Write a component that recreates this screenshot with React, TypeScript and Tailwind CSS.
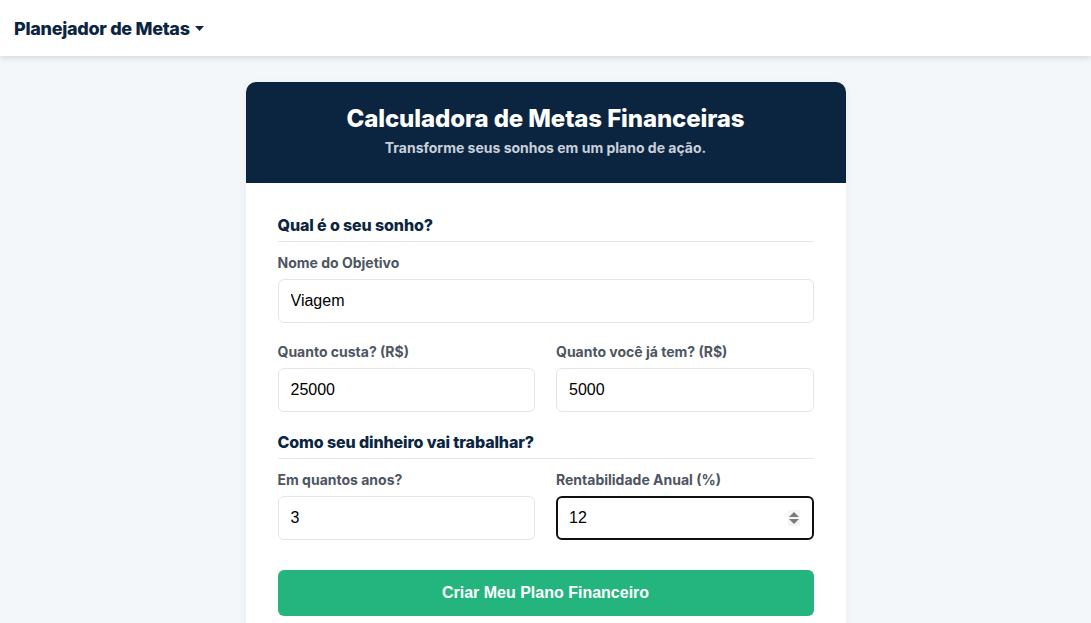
import React from 'react';

const Field = ({ label, value, focused }: { label: string; value: string; focused?: boolean }) => (
  <div className="flex flex-col">
    <label className="mb-[6px] text-[14px] leading-[20px] font-bold text-[#4d5562]">{label}</label>
    <div className="relative">
      <input
        readOnly
        value={value}
        className={`h-[44px] w-full rounded-[6px] bg-white px-[12px] text-[16px] text-black outline-none [font-family:'Liberation_Sans',Arial,sans-serif] ${
          focused ? 'border-2 border-[#101010] pl-[11px]' : 'border border-[#e2e6ec]'
        }`}
      />
      {focused && (
        <svg className="absolute right-[14px] top-[14px]" width="12" height="16" viewBox="0 0 12 16">
          <rect x="0" y="0" width="12" height="16" fill="#f4f4f4" />
          <path d="M6 2 L11 7 L1 7 Z" fill="#7a7a7a" />
          <path d="M6 14 L11 9 L1 9 Z" fill="#7a7a7a" />
        </svg>
      )}
    </div>
  </div>
);

const SectionTitle = ({ children }: { children: React.ReactNode }) => (
  <h3 className="border-b border-[#e5e8ed] pb-[6px] text-[16px] leading-[20px] font-extrabold tracking-[-0.12px] text-[#0b2541]">
    {children}
  </h3>
);

export default function App() {
  return (
    <div className="min-h-[623px] bg-[#f4f7fa] font-['Inter',sans-serif]">
      {/* Navbar */}
      <nav className="flex h-[56px] items-center bg-white px-[14px] shadow-[0_2px_6px_rgba(0,0,0,0.12)]">
        <span className="text-[18px] font-extrabold tracking-[-0.3px] text-[#0b2541]">Planejador de Metas</span>
        <svg className="ml-[5px]" width="9" height="5" viewBox="0 0 9 5">
          <path d="M0 0 L9 0 L4.5 5 Z" fill="#0b2541" />
        </svg>
      </nav>

      <div className="flex justify-center pt-[26px]">
        <div className="w-[600px] overflow-hidden rounded-[10px] bg-white shadow-[0_2px_10px_rgba(0,0,0,0.05)]">
          {/* Header */}
          <div className="flex h-[101px] flex-col items-center bg-[#0b2541] pt-[22px]">
            <h1 className="text-[24px] leading-[30px] font-extrabold tracking-[-0.1px] text-white">
              Calculadora de Metas Financeiras
            </h1>
            <p className="mt-[5px] text-[14px] leading-[18px] font-bold text-[#c9d0da]">
              Transforme seus sonhos em um plano de ação.
            </p>
          </div>

          {/* Body */}
          <div className="px-[32px] pt-[32px] pb-[32px]">
            <SectionTitle>Qual é o seu sonho?</SectionTitle>
            <div className="mt-[11px]">
              <Field label="Nome do Objetivo" value="Viagem" />
            </div>
            <div className="mt-[19px] grid grid-cols-2 gap-x-[21px]">
              <Field label="Quanto custa? (R$)" value="25000" />
              <Field label="Quanto você já tem? (R$)" value="5000" />
            </div>

            <div className="mt-[20px]">
              <SectionTitle>Como seu dinheiro vai trabalhar?</SectionTitle>
            </div>
            <div className="mt-[11px] grid grid-cols-2 gap-x-[21px]">
              <Field label="Em quantos anos?" value="3" />
              <Field label="Rentabilidade Anual (%)" value="12" focused />
            </div>

            <button className="mt-[30px] h-[46px] w-full rounded-[6px] bg-[#24b57f] text-[16px] font-bold text-white [font-family:'Liberation_Sans',Arial,sans-serif]">
              Criar Meu Plano Financeiro
            </button>
          </div>
        </div>
      </div>
    </div>
  );
}
